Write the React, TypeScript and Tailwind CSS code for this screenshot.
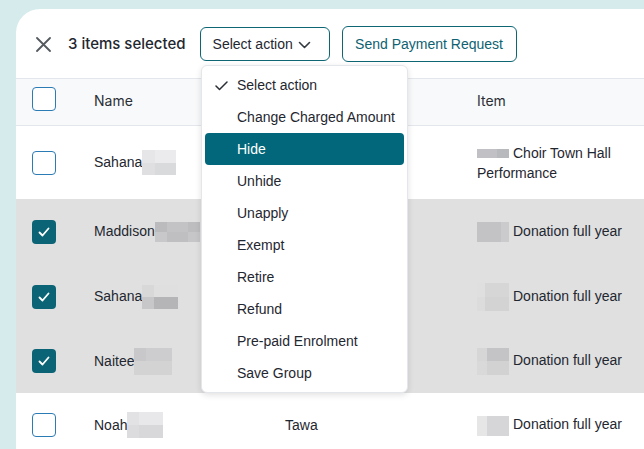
import React from "react";

const ARIAL = { fontFamily: '"Liberation Sans", Arial, sans-serif' };

function Pix({ cols, rows, colors }: { cols: number[]; rows: number[]; colors: string[][] }) {
  return (
    <span className="inline-flex flex-col align-middle">
      {rows.map((h, r) => (
        <span key={r} className="flex">
          {cols.map((w, c) => (
            <span key={c} style={{ width: w, height: h, background: colors[r][c] }} />
          ))}
        </span>
      ))}
    </span>
  );
}

function Checkbox({ checked }: { checked?: boolean }) {
  if (checked)
    return (
      <div className="w-[24px] h-[24px] rounded-[4px] bg-[#0b6475] flex items-center justify-center">
        <svg width="14" height="14" viewBox="0 0 14 14" fill="none">
          <path d="M2.5 7.5 L5.5 10.5 L11.5 3.5" stroke="white" strokeWidth="1.8" strokeLinecap="round" strokeLinejoin="round" />
        </svg>
      </div>
    );
  return <div className="w-[24px] h-[24px] rounded-[4px] border border-[#2b7bb5] bg-white" />;
}

type Row = {
  checked: boolean;
  h: number;
  name: string;
  namePix: React.ReactNode;
  col3: string;
  itemPix: React.ReactNode;
  item: string;
};

const rows: Row[] = [
  {
    checked: false,
    h: 73,
    name: "Sahana",
    namePix: <Pix cols={[13, 21]} rows={[13, 12]} colors={[["#e6e6e8", "#ebebed"], ["#dfdfe1", "#d9dadc"]]} />,
    col3: "",
    itemPix: <Pix cols={[20, 12]} rows={[9]} colors={[["#c0c0c5", "#b8b9bd"]]} />,
    item: "Choir Town Hall Performance",
  },
  {
    checked: true,
    h: 65,
    name: "Maddison",
    namePix: <Pix cols={[12, 21, 12]} rows={[10, 10]} colors={[["#bbbbbe", "#c3c3c6", "#bdbdc0"], ["#c8c8ca", "#bfbfc2", "#c6c6c8"]]} />,
    col3: "",
    itemPix: <Pix cols={[24, 8]} rows={[20]} colors={[["#c3c3c6", "#cbcbcd"]]} />,
    item: "Donation full year",
  },
  {
    checked: true,
    h: 65,
    name: "Sahana",
    namePix: <Pix cols={[12, 24]} rows={[12, 12]} colors={[["#d8d8d9", "#dfdfdf"], ["#c7c7c9", "#b5b5b8"]]} />,
    col3: "",
    itemPix: <Pix cols={[8, 24]} rows={[14, 14]} colors={[["#dfdfdf", "#d6d6d7"], ["#dcdcdc", "#d3d3d4"]]} />,
    item: "Donation full year",
  },
  {
    checked: true,
    h: 64,
    name: "Naitee",
    namePix: <Pix cols={[12, 26]} rows={[13, 14]} colors={[["#c8c7c9", "#cdcdcf"], ["#d3d3d4", "#d3d3d4"]]} />,
    col3: "",
    itemPix: <Pix cols={[10, 22]} rows={[13, 14]} colors={[["#d6d6d7", "#c4c4c6"], ["#d9d9da", "#d2d2d3"]]} />,
    item: "Donation full year",
  },
  {
    checked: false,
    h: 64,
    name: "Noah",
    namePix: <Pix cols={[12, 24]} rows={[13, 13]} colors={[["#e2e2e5", "#e8e8ea"], ["#dcdcdf", "#d8d8da"]]} />,
    col3: "Tawa",
    itemPix: <Pix cols={[10, 22]} rows={[20]} colors={[["#e6e6e6", "#d6d6d8"]]} />,
    item: "Donation full year",
  },
];

const menu = [
  "Select action",
  "Change Charged Amount",
  "Hide",
  "Unhide",
  "Unapply",
  "Exempt",
  "Retire",
  "Refund",
  "Pre-paid Enrolment",
  "Save Group",
];

export default function App() {
  return (
    <div className="w-[644px] h-[449px] bg-[#d5ebec] pt-[9px] pl-[16px] overflow-hidden">
      <div className="relative bg-white rounded-tl-[24px] h-[440px] w-[628px] overflow-hidden">
        {/* Header */}
        <div className="h-[69px] flex items-center pl-[20px]">
          <svg width="15" height="15" viewBox="0 0 15 15" className="mr-[17px] mt-[1px]">
            <path d="M1 1 L14 14 M14 1 L1 14" stroke="#555a60" strokeWidth="1.8" strokeLinecap="round" />
          </svg>
          <span className="text-[15px] font-medium text-[#1f2730] mr-[14px] mt-[1px]" style={{ fontFamily: "Inter, sans-serif" }}>
            3 items selected
          </span>
          <div
            className="h-[34px] w-[130px] border border-[#0e6675] rounded-[6px] flex items-center pl-[12px] text-[14px] text-[#1f2730] mr-[12px] mt-[1px]"
            style={ARIAL}
          >
            Select action
            <svg width="13" height="8" viewBox="0 0 13 8" className="ml-[5px] mt-[1px]">
              <path d="M1.5 1.5 L6.5 6.5 L11.5 1.5" stroke="#333a40" strokeWidth="1.6" fill="none" strokeLinecap="round" strokeLinejoin="round" />
            </svg>
          </div>
          <div
            className="h-[36px] w-[175px] border border-[#0e6675] rounded-[6px] flex items-center justify-center text-[14px] text-[#0e6272] mt-[1px]"
            style={ARIAL}
          >
            Send Payment Request
          </div>
        </div>

        {/* Table header */}
        <div className="h-[48px] bg-[#f8f9fa] border-y border-[#e3e6ea] flex items-center text-[14px] text-[#2a2f36]" style={{ fontFamily: "Inter, sans-serif" }}>
          <div className="w-[78px] pl-[16px] -mt-[6px]">
            <Checkbox />
          </div>
          <div className="w-[191px] -mt-[3px]">Name</div>
          <div className="w-[192px]"></div>
          <div className="-mt-[3px]">Item</div>
        </div>

        {/* Rows */}
        {rows.map((r, i) => (
          <div
            key={i}
            className={`flex items-center text-[14px] text-[#1f2730] ${r.checked ? "bg-[#e0e0e0]" : "bg-white"}`}
            style={{ height: r.h, ...ARIAL }}
          >
            <div className="w-[78px] pl-[16px]">
              <Checkbox checked={r.checked} />
            </div>
            <div className="w-[191px] flex items-center">
              <span>{r.name}</span>
              {r.namePix}
            </div>
            <div className="w-[192px]">{r.col3}</div>
            <div className="w-[160px] leading-[20px]">
              <span className="mr-[4px]">{r.itemPix}</span>
              {r.item}
            </div>
          </div>
        ))}

        {/* Dropdown */}
        <div
          className="absolute left-[185px] top-[56px] w-[207px] bg-white border border-[#e3e6ea] rounded-[6px] shadow-[0_2px_6px_rgba(0,0,0,0.12)] py-[3px] px-[3px]"
          style={ARIAL}
        >
          {menu.map((m, i) => (
            <div
              key={m}
              className={`h-[32px] rounded-[4px] flex items-center pl-[32px] relative text-[14px] ${
                i === 2 ? "bg-[#02677a] text-white" : "text-[#1f2730]"
              }`}
            >
              {i === 0 && (
                <svg width="13" height="10" viewBox="0 0 13 10" className="absolute left-[10px] top-[12px]">
                  <path d="M1 5 L4.5 8.5 L12 1" stroke="#2a2f36" strokeWidth="1.5" fill="none" strokeLinecap="round" strokeLinejoin="round" />
                </svg>
              )}
              {m}
            </div>
          ))}
        </div>
      </div>
    </div>
  );
}
